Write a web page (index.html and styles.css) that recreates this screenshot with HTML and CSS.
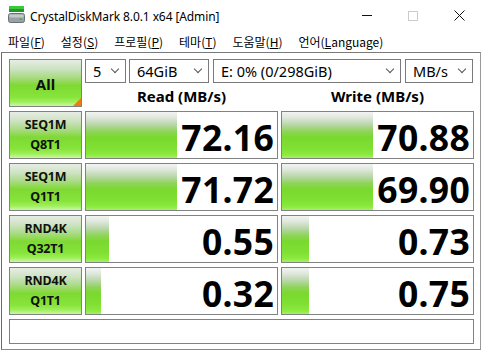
FILE: index.html
```html
<!DOCTYPE html>
<html>
<head>
<meta charset="utf-8">
<link rel="stylesheet" href="styles.css">
</head>
<body>
<div class="window">
  <div class="titlebar">
    <svg class="appicon" width="17" height="18" viewBox="0 0 17 18">
      <rect x="1" y="0" width="15" height="3" fill="#3cc83c"/>
      <rect x="1" y="3" width="15" height="3" fill="#1e9a2a"/>
      <rect x="0.5" y="7.5" width="16" height="9" rx="2" fill="#9aa0a6" stroke="#6a7076"/>
      <rect x="1.5" y="8.5" width="14" height="3" fill="#c4c8cc"/>
      <rect x="11" y="12" width="3" height="2" fill="#38c838"/>
    </svg>
    <span class="title">CrystalDiskMark 8.0.1 x64 [Admin]</span>
    <div class="winbtns">
      <span class="wb"><span class="minline"></span></span>
      <span class="wb"><span class="maxbox"></span></span>
      <span class="wb">
        <svg width="11" height="11" viewBox="0 0 11 11"><path d="M0.5 0.5L10.5 10.5M10.5 0.5L0.5 10.5" stroke="#111" stroke-width="1"/></svg>
      </span>
    </div>
  </div>
  <div class="menubar">
    <span class="mi">파일(<u>F</u>)</span>
    <span class="mi">설정(<u>S</u>)</span>
    <span class="mi">프로필(<u>P</u>)</span>
    <span class="mi">테마(<u>T</u>)</span>
    <span class="mi">도움말(<u>H</u>)</span>
    <span class="mi">언어(<u>L</u>anguage)</span>
  </div>
  <div class="client">
    <div class="board">
      <div class="btn all">All<span class="corner"></span></div>
      <div class="topright">
        <div class="combos">
          <div class="combo c1"><span>5</span><i class="chev"></i></div>
          <div class="combo c2"><span>64GiB</span><i class="chev"></i></div>
          <div class="combo c3"><span>E: 0% (0/298GiB)</span><i class="chev"></i></div>
          <div class="combo c4"><span>MB/s</span><i class="chev"></i></div>
        </div>
        <div class="heads">
          <div class="head">Read (MB/s)</div>
          <div class="head">Write (MB/s)</div>
        </div>
      </div>

      <div class="btn test"><span>SEQ1M</span><span>Q8T1</span></div>
      <div class="cell"><div class="bar" style="width:91px"></div><div class="val">72.16</div></div>
      <div class="cell"><div class="bar" style="width:91px"></div><div class="val">70.88</div></div>

      <div class="btn test"><span>SEQ1M</span><span>Q1T1</span></div>
      <div class="cell"><div class="bar" style="width:91px"></div><div class="val">71.72</div></div>
      <div class="cell"><div class="bar" style="width:91px"></div><div class="val">69.90</div></div>

      <div class="btn test"><span>RND4K</span><span>Q32T1</span></div>
      <div class="cell"><div class="bar" style="width:23px"></div><div class="val">0.55</div></div>
      <div class="cell"><div class="bar" style="width:27px"></div><div class="val">0.73</div></div>

      <div class="btn test"><span>RND4K</span><span>Q1T1</span></div>
      <div class="cell"><div class="bar" style="width:15px"></div><div class="val">0.32</div></div>
      <div class="cell"><div class="bar" style="width:27px"></div><div class="val">0.75</div></div>

      <div class="status"></div>
    </div>
  </div>
</div>
</body>
</html>
```

FILE: styles.css
```css
* { box-sizing: border-box; }
html, body {
  margin: 0;
  padding: 0;
  background: #ffffff;
}
body {
  width: 482px;
  height: 352px;
  overflow: hidden;
  font-family: "Noto Sans", "Noto Sans CJK KR", sans-serif;
  color: #000;
}
.window {
  width: 482px;
  height: 352px;
  background: #fff;
}
.titlebar {
  height: 31px;
  display: flex;
  align-items: center;
  padding-left: 8px;
}
.appicon { display: block; margin-right: 5px; margin-top: -1px; }
.title {
  font-size: 12px;
  letter-spacing: -0.1px;
  color: #000;
  padding-top: 1px;
}
.winbtns {
  margin-left: auto;
  display: flex;
  height: 31px;
}
.wb {
  width: 46px;
  height: 31px;
  display: flex;
  align-items: center;
  justify-content: center;
}
.minline {
  display: block;
  width: 10px;
  height: 1px;
  background: #111;
}
.maxbox {
  display: block;
  width: 10px;
  height: 10px;
  border: 1px solid #cccccc;
}
.menubar {
  height: 21px;
  display: flex;
  align-items: center;
  padding-left: 8px;
  gap: 16px;
  font-family: "Noto Sans CJK KR", "Noto Sans", sans-serif;
  font-size: 12px;
}
.mi u { text-underline-offset: 1px; }
.client {
  margin-left: 1px;
  width: 480px;
  height: 298px;
  border-top: 1px solid #7a7a7a;
  border-left: 1px solid #6a6a6a;
  border-right: 1px solid #9a9a9a;
  border-bottom: 1px solid #8a8a8a;
  padding: 6px 0 0 7px;
}
.board {
  display: grid;
  grid-template-columns: 73px 193px 193px;
  grid-template-rows: 48px 48px 48px 48px 48px 25px;
  column-gap: 3px;
  row-gap: 4px;
}
.btn {
  border: 1px solid #828282;
  background: linear-gradient(to bottom, #e6ede4 0%, #cfe3c6 18%, #a9db84 38%, #7fd934 55%, #86e43a 80%, #9cee55 90%, #c9f7a4 100%);
  display: flex;
  flex-direction: column;
  align-items: center;
  justify-content: center;
  font-weight: bold;
  color: #111;
}
.all {
  position: relative;
  font-size: 15px;
  padding-top: 2px;
}
.corner {
  position: absolute;
  right: 0;
  bottom: 0;
  width: 0;
  height: 0;
  border-left: 8px solid transparent;
  border-bottom: 8px solid #f07a10;
}
.test {
  font-size: 12.5px;
  line-height: 20px;
  letter-spacing: -0.2px;
}
.topright {
  grid-column: 2 / 4;
  display: flex;
  flex-direction: column;
}
.combos {
  display: flex;
  height: 24px;
}
.combo {
  height: 24px;
  border: 1px solid #7a7a7a;
  display: flex;
  align-items: center;
  padding-left: 7px;
  padding-right: 6px;
  font-size: 14.5px;
  color: #000;
  background: #fff;
}
.combo span { flex: 1; white-space: nowrap; }
.c1 { width: 41px; margin-right: 3px; }
.c2 { width: 80px; margin-right: 4px; }
.c3 { width: 188px; margin-right: 4px; }
.c4 { width: 68px; }
.chev {
  display: block;
  width: 6px;
  height: 6px;
  border-right: 1px solid #555;
  border-bottom: 1px solid #555;
  transform: rotate(45deg);
  margin-top: -4px;
  margin-right: 1px;
}
.heads {
  flex: 1;
  display: grid;
  grid-template-columns: 193px 193px;
  column-gap: 3px;
  align-items: center;
}
.head {
  text-align: center;
  font-weight: bold;
  font-size: 15px;
  padding-top: 2px;
}
.cell {
  border: 1px solid #828282;
  display: grid;
  background: #fff;
}
.bar, .val {
  grid-area: 1 / 1;
}
.bar {
  justify-self: start;
  height: 100%;
  background: linear-gradient(to bottom, #f2f4f2 0%, #dfe8dd 12%, #b8d6a6 28%, #8fd45a 42%, #79d92c 55%, #80e134 80%, #8be93d 92%, #a5f064 100%);
}
.val {
  position: relative;
  align-self: center;
  justify-self: end;
  font-weight: bold;
  font-size: 35.5px;
  line-height: 40px;
  padding-right: 3px;
  padding-top: 3px;
  letter-spacing: 0.3px;
}
.status {
  grid-column: 1 / 4;
  border: 1px solid #828282;
  background: #fff;
}
```
